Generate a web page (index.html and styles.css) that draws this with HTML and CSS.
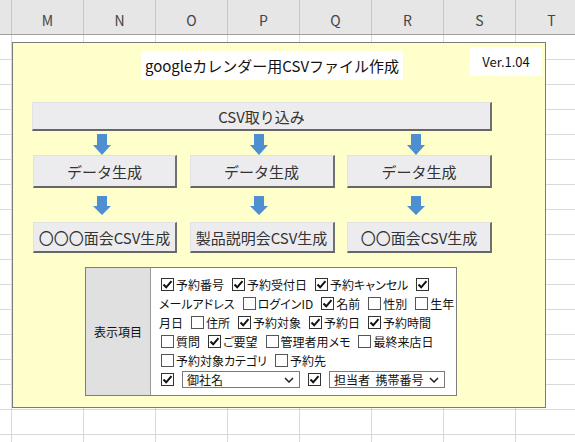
FILE: index.html
```html
<!DOCTYPE html>
<html lang="ja">
<head>
<meta charset="utf-8">
<title>googleカレンダー用CSVファイル作成</title>
<link rel="stylesheet" href="styles.css">
</head>
<body>
<div class="sheet">
  <div class="col-heads">
    <div class="corner"></div>
    <div class="ch">M</div>
    <div class="ch">N</div>
    <div class="ch">O</div>
    <div class="ch">P</div>
    <div class="ch">Q</div>
    <div class="ch">R</div>
    <div class="ch">S</div>
    <div class="ch">T</div>
  </div>
  <div class="grid"></div>

  <div class="panel">
    <div class="top-row">
      <div class="title">googleカレンダー用CSVファイル作成</div>
      <div class="ver">Ver.1.04</div>
    </div>
    <div class="btn import">CSV取り込み</div>

    <div class="flow">
      <div class="col">
        <svg class="arrow" width="18" height="21" viewBox="0 0 18 21"><path d="M4 0H14V11H18L9 21L0 11H4Z"/></svg>
        <div class="btn data">データ生成</div>
        <svg class="arrow arrow2" width="18" height="19" viewBox="0 0 18 19"><path d="M4 0H14V10H18L9 19L0 10H4Z"/></svg>
        <div class="btn gen">〇〇〇面会CSV生成</div>
      </div>
      <div class="col">
        <svg class="arrow" width="18" height="21" viewBox="0 0 18 21"><path d="M4 0H14V11H18L9 21L0 11H4Z"/></svg>
        <div class="btn data">データ生成</div>
        <svg class="arrow arrow2" width="18" height="19" viewBox="0 0 18 19"><path d="M4 0H14V10H18L9 19L0 10H4Z"/></svg>
        <div class="btn gen">製品説明会CSV生成</div>
      </div>
      <div class="col">
        <svg class="arrow" width="18" height="21" viewBox="0 0 18 21"><path d="M4 0H14V11H18L9 21L0 11H4Z"/></svg>
        <div class="btn data">データ生成</div>
        <svg class="arrow arrow2" width="18" height="19" viewBox="0 0 18 19"><path d="M4 0H14V10H18L9 19L0 10H4Z"/></svg>
        <div class="btn gen">〇〇面会CSV生成</div>
      </div>
    </div>

    <div class="opts">
      <div class="opts-label">表示項目</div>
      <div class="opts-body">
        <div class="line">
          <span class="item"><svg class="cb" viewBox="0 0 13 13"><rect x="0.5" y="0.5" width="12" height="12"/><path class="tick" d="M2.5 6.5L5.2 9.3L10.5 3.2"/></svg>予約番号</span>
          <span class="item"><svg class="cb" viewBox="0 0 13 13"><rect x="0.5" y="0.5" width="12" height="12"/><path class="tick" d="M2.5 6.5L5.2 9.3L10.5 3.2"/></svg>予約受付日</span>
          <span class="item"><svg class="cb" viewBox="0 0 13 13"><rect x="0.5" y="0.5" width="12" height="12"/><path class="tick" d="M2.5 6.5L5.2 9.3L10.5 3.2"/></svg>予約キャンセル</span>
          <span class="item"><svg class="cb" viewBox="0 0 13 13"><rect x="0.5" y="0.5" width="12" height="12"/><path class="tick" d="M2.5 6.5L5.2 9.3L10.5 3.2"/></svg></span>
        </div>
        <div class="line">
          <span class="item">メールアドレス</span>
          <span class="item"><svg class="cb off" viewBox="0 0 13 13"><rect x="0.5" y="0.5" width="12" height="12"/></svg>ログインID</span>
          <span class="item"><svg class="cb" viewBox="0 0 13 13"><rect x="0.5" y="0.5" width="12" height="12"/><path class="tick" d="M2.5 6.5L5.2 9.3L10.5 3.2"/></svg>名前</span>
          <span class="item"><svg class="cb off" viewBox="0 0 13 13"><rect x="0.5" y="0.5" width="12" height="12"/></svg>性別</span>
          <span class="item"><svg class="cb off" viewBox="0 0 13 13"><rect x="0.5" y="0.5" width="12" height="12"/></svg>生年</span>
        </div>
        <div class="line">
          <span class="item">月日</span>
          <span class="item"><svg class="cb off" viewBox="0 0 13 13"><rect x="0.5" y="0.5" width="12" height="12"/></svg>住所</span>
          <span class="item"><svg class="cb" viewBox="0 0 13 13"><rect x="0.5" y="0.5" width="12" height="12"/><path class="tick" d="M2.5 6.5L5.2 9.3L10.5 3.2"/></svg>予約対象</span>
          <span class="item"><svg class="cb" viewBox="0 0 13 13"><rect x="0.5" y="0.5" width="12" height="12"/><path class="tick" d="M2.5 6.5L5.2 9.3L10.5 3.2"/></svg>予約日</span>
          <span class="item"><svg class="cb" viewBox="0 0 13 13"><rect x="0.5" y="0.5" width="12" height="12"/><path class="tick" d="M2.5 6.5L5.2 9.3L10.5 3.2"/></svg>予約時間</span>
        </div>
        <div class="line">
          <span class="item"><svg class="cb off" viewBox="0 0 13 13"><rect x="0.5" y="0.5" width="12" height="12"/></svg>質問</span>
          <span class="item"><svg class="cb" viewBox="0 0 13 13"><rect x="0.5" y="0.5" width="12" height="12"/><path class="tick" d="M2.5 6.5L5.2 9.3L10.5 3.2"/></svg>ご要望</span>
          <span class="item"><svg class="cb off" viewBox="0 0 13 13"><rect x="0.5" y="0.5" width="12" height="12"/></svg>管理者用メモ</span>
          <span class="item"><svg class="cb off" viewBox="0 0 13 13"><rect x="0.5" y="0.5" width="12" height="12"/></svg>最終来店日</span>
        </div>
        <div class="line">
          <span class="item"><svg class="cb off" viewBox="0 0 13 13"><rect x="0.5" y="0.5" width="12" height="12"/></svg>予約対象カテゴリ</span>
          <span class="item"><svg class="cb off" viewBox="0 0 13 13"><rect x="0.5" y="0.5" width="12" height="12"/></svg>予約先</span>
        </div>
        <div class="line">
          <span class="item"><svg class="cb" viewBox="0 0 13 13"><rect x="0.5" y="0.5" width="12" height="12"/><path class="tick" d="M2.5 6.5L5.2 9.3L10.5 3.2"/></svg></span>
          <span class="select s1">御社名<svg class="chev" viewBox="0 0 10 6"><path d="M1 1L5 5L9 1"/></svg></span>
          <span class="item"><svg class="cb" viewBox="0 0 13 13"><rect x="0.5" y="0.5" width="12" height="12"/><path class="tick" d="M2.5 6.5L5.2 9.3L10.5 3.2"/></svg></span>
          <span class="select s2">担当者&nbsp;&nbsp;携帯番号<svg class="chev" viewBox="0 0 10 6"><path d="M1 1L5 5L9 1"/></svg></span>
        </div>
      </div>
    </div>
  </div>
</div>
</body>
</html>
```

FILE: styles.css
```css
* { box-sizing: border-box; }
html, body { margin: 0; padding: 0; }
body {
  width: 575px;
  height: 442px;
  overflow: hidden;
  background: #ffffff;
  font-family: "Noto Sans CJK JP", "Noto Sans", sans-serif;
}
.sheet {
  position: relative;
  width: 575px;
  height: 442px;
}
.col-heads {
  display: grid;
  grid-template-columns: 12px repeat(8, 72px);
  height: 35px;
  background: #e6e6e6;
  border-bottom: 1px solid #a0a0a0;
}
.corner { border-right: 1px solid #c8c8c8; }
.ch {
  border-right: 1px solid #c8c8c8;
  font-size: 14px;
  color: #444;
  text-align: center;
  padding-top: 10px;
  line-height: 20px;
}
.grid {
  height: 407px;
  background-image:
    linear-gradient(to right, #d9d9d9 1px, transparent 1px),
    linear-gradient(to bottom, transparent 24px, #d9d9d9 24px);
  background-size: 72px 100%, 100% 25px;
  background-position: 11px 0, 0 0;
}
.panel {
  position: absolute;
  left: 12px;
  top: 42px;
  width: 534px;
  height: 366px;
  background: #ffffcc;
  border: 1px solid #7a7a7a;
}
.top-row {
  display: flex;
  align-items: flex-start;
  height: 37px;
}
.title {
  margin-left: 128px;
  margin-top: 8px;
  width: 262px;
  height: 29px;
  background: #fff;
  font-size: 15px;
  line-height: 29px;
  text-align: center;
  color: #111;
}
.ver {
  margin-left: auto;
  margin-right: 3px;
  margin-top: 4px;
  width: 72px;
  height: 29px;
  background: #fff;
  font-size: 13px;
  line-height: 29px;
  text-align: center;
  color: #111;
}
.btn {
  display: flex;
  align-items: center;
  justify-content: center;
  background: #ececef;
  border-top: 1px solid #e2e2e2;
  border-left: 1px solid #e2e2e2;
  border-right: 2px solid #707070;
  border-bottom: 2px solid #666;
  font-size: 15px;
  color: #333;
  white-space: nowrap;
}
.import {
  margin: 22px 0 0 19px;
  width: 460px;
  height: 29px;
}
.flow {
  display: grid;
  grid-template-columns: 144px 145px 145px;
  column-gap: 12.5px;
  margin: 3px 0 0 20px;
}
.col {
  display: flex;
  flex-direction: column;
  align-items: center;
}
.arrow { display: block; margin-right: 7px; }
.arrow path { fill: #4d8fd1; }
.arrow2 { margin-top: 8px; }
.data { width: 100%; height: 33px; }
.gen { width: 100%; height: 31px; margin-top: 7px; font-size: 15px; }
.opts {
  display: flex;
  margin: 14px 0 0 72px;
  width: 372px;
  height: 129px;
  border: 1px solid #7d7d7d;
  background: #fff;
}
.opts-label {
  width: 65px;
  flex: none;
  background: #e0e0e0;
  border-right: 1px solid #9a9a9a;
  display: flex;
  align-items: center;
  justify-content: center;
  font-size: 12px;
  color: #111;
}
.opts-body {
  flex: 1;
  padding: 7px 0 0 8px;
  font-size: 12px;
  color: #111;
  font-feature-settings: "palt";
}
.line {
  display: flex;
  align-items: center;
  gap: 6px;
  height: 19px;
  white-space: nowrap;
}
.item {
  display: flex;
  align-items: center;
}
.cb {
  width: 13px;
  height: 13px;
  margin-left: 2px;
  margin-right: 2px;
  flex: none;
}
.cb rect { fill: #fff; stroke: #333; stroke-width: 1; }
.cb.off rect { stroke: #555; }
.cb .tick { fill: none; stroke: #111; stroke-width: 2; }
.select {
  display: flex;
  align-items: center;
  justify-content: space-between;
  height: 17px;
  border: 1px solid #7a7a7a;
  padding: 0 5px 0 4px;
  background: #fff;
  font-size: 12px;
}
.s1 { width: 118px; }
.s2 { width: 116px; }
.chev { width: 10px; height: 6px; flex: none; margin-left: 4px; }
.chev path { fill: none; stroke: #222; stroke-width: 1.5; }
```
